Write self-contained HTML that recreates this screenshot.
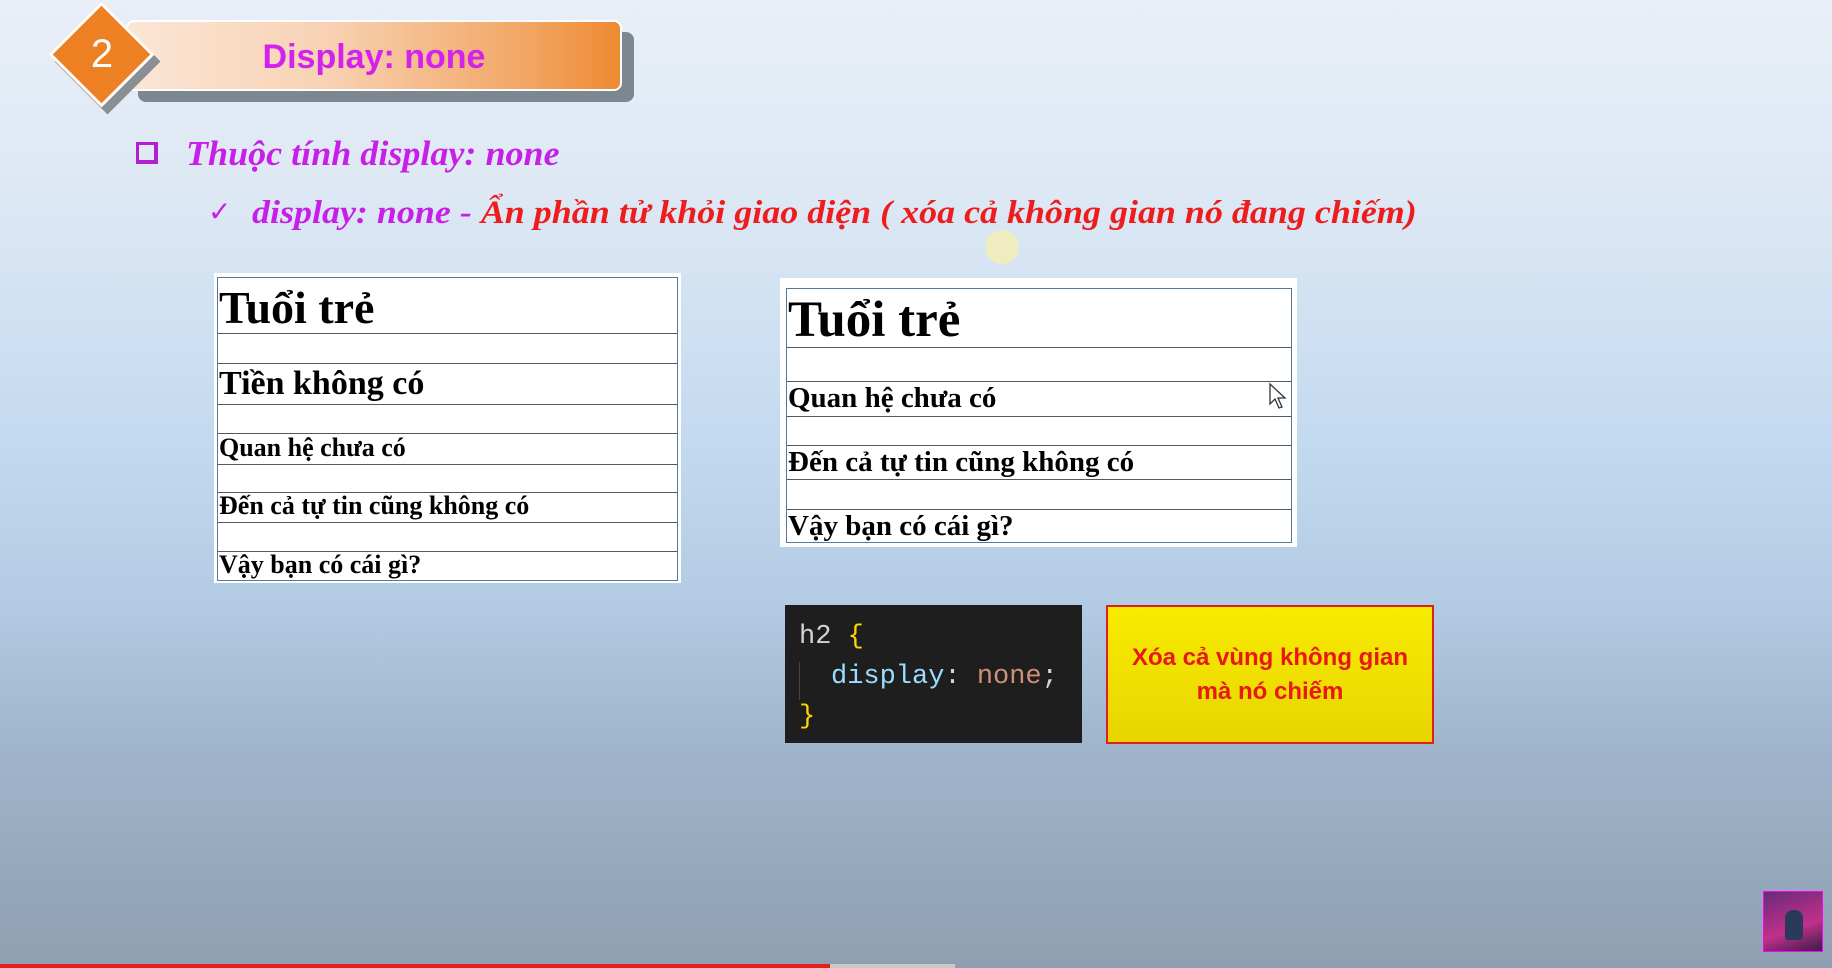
<!DOCTYPE html>
<html><head><meta charset="utf-8"><style>
*{margin:0;padding:0;box-sizing:border-box}
body{width:1832px;height:968px;overflow:hidden;position:relative;
background:linear-gradient(180deg,#e9eff7 0%,#dde8f4 20%,#c4daf0 45%,#b3cbe3 62%,#9fb4cb 78%,#8e9fb0 100%);
font-family:"Liberation Serif",serif}
.abs{position:absolute}
.tbl{position:absolute;background:#fff}
.in{position:absolute;border:1px solid #5a7890}
.ln{position:absolute;left:0;right:0;height:1px;background:#4a5a68}
.t{position:absolute;font-weight:bold;color:#000;white-space:nowrap;font-family:"Liberation Serif",serif}
</style></head><body>
<!-- banner -->
<div class="abs" style="left:138px;top:32px;width:496px;height:70px;background:#7d8790;border-radius:8px"></div>
<div class="abs" style="left:126px;top:20px;width:496px;height:71px;border-radius:8px;border:2px solid #fff;background:linear-gradient(90deg,#fbe6d6 0%,#f8d2b4 40%,#f2a766 80%,#ee8a32 100%)"></div>
<div class="abs" style="width:75px;height:75px;background:#8a8f96;transform:rotate(45deg);top:24px;left:70px"></div>
<div class="abs" style="left:64px;top:17px;width:75px;height:75px;background:#ee8024;border:3px solid #fff;transform:rotate(45deg)"></div>
<div class="abs" style="left:82px;top:32px;width:40px;text-align:center;color:#fff;font:40px 'Liberation Sans Narrow','Liberation Sans',sans-serif">2</div>
<div class="abs" style="left:126px;top:38px;width:496px;text-align:center;color:#d122ee;font:bold 34px 'Liberation Sans Narrow','Liberation Sans',sans-serif">Display: none</div>
<!-- bullets -->
<div class="abs" style="left:136px;top:142px;width:22px;height:22px;border:3px solid #b020d0;border-right-width:4px;border-bottom-width:4px"></div>
<div class="abs" style="left:186px;top:134px;color:#c81fe8;font:italic bold 35px 'Liberation Serif',serif;white-space:nowrap;transform:scaleX(1.03);transform-origin:left">Thuộc tính display: none</div>
<div class="abs" style="left:208px;top:195px;color:#c81fe8;font:28px 'DejaVu Sans',sans-serif">✓</div>
<div class="abs" style="left:252px;top:195px;font:italic bold 33px 'Liberation Serif',serif;white-space:nowrap;transform:scaleX(1.09);transform-origin:left"><span style="color:#c81fe8">display: none - </span><span style="color:#ee1c1c">Ẩn phần tử khỏi giao diện ( xóa cả không gian nó đang chiếm)</span></div>
<div class="abs" style="left:985px;top:230px;width:34px;height:34px;border-radius:50%;background:rgba(250,240,170,.7)"></div>
<!-- left table -->
<div class="tbl" style="left:214px;top:273px;width:467px;height:310px">
 <div class="in" style="left:3px;top:4px;width:461px;height:304px">
  <div class="ln" style="top:55px"></div><div class="ln" style="top:85px"></div>
  <div class="ln" style="top:126px"></div><div class="ln" style="top:155px"></div>
  <div class="ln" style="top:186px"></div><div class="ln" style="top:214px"></div>
  <div class="ln" style="top:244px"></div><div class="ln" style="top:273px"></div>
  <div class="t" style="left:1px;top:3px;font-size:46px">Tuổi trẻ</div>
  <div class="t" style="left:1px;top:87px;font-size:34px">Tiền không có</div>
  <div class="t" style="left:1px;top:155px;font-size:26px">Quan hệ chưa có</div>
  <div class="t" style="left:1px;top:213px;font-size:26px">Đến cả tự tin cũng không có</div>
  <div class="t" style="left:1px;top:272px;font-size:26px">Vậy bạn có cái gì?</div>
 </div>
</div>
<!-- right table -->
<div class="tbl" style="left:780px;top:278px;width:517px;height:269px">
 <div class="in" style="left:6px;top:10px;width:506px;height:255px">
  <div class="ln" style="top:58px"></div><div class="ln" style="top:92px"></div>
  <div class="ln" style="top:127px"></div><div class="ln" style="top:156px"></div>
  <div class="ln" style="top:190px"></div><div class="ln" style="top:220px"></div>
  <div class="t" style="left:1px;top:2px;font-size:51px">Tuổi trẻ</div>
  <div class="t" style="left:1px;top:93px;font-size:29px">Quan hệ chưa có</div>
  <div class="t" style="left:1px;top:157px;font-size:29px">Đến cả tự tin cũng không có</div>
  <div class="t" style="left:1px;top:221px;font-size:29px">Vậy bạn có cái gì?</div>
 </div>
 <svg class="abs" style="left:488px;top:104px" width="20" height="28" viewBox="0 0 20 28"><path d="M2 2 L2 22 L7 17 L11 26 L14 25 L10 16 L17 16 Z" fill="#fff" stroke="#333" stroke-width="1.3"/></svg>
</div>
<!-- code box -->
<div class="abs" style="left:785px;top:605px;width:297px;height:138px;background:#1e1e1e;font:27px 'Liberation Mono',monospace">
 <div class="abs" style="left:14px;top:17px;white-space:pre;color:#d4d4d4">h2 <span style="color:#ffd700">{</span></div>
 <div class="abs" style="left:14px;top:57px;width:1px;height:38px;background:#444"></div>
 <div class="abs" style="left:46px;top:57px;white-space:pre"><span style="color:#9cdcfe">display</span><span style="color:#d4d4d4">: </span><span style="color:#ce9178">none</span><span style="color:#d4d4d4">;</span></div>
 <div class="abs" style="left:14px;top:97px;color:#ffd700">}</div>
</div>
<!-- yellow -->
<div class="abs" style="left:1106px;top:605px;width:328px;height:139px;background:linear-gradient(180deg,#f8ec00,#e8d400);border:2px solid #e02020;display:flex;align-items:center;justify-content:center;text-align:center;color:#e81818;font:bold 24px/34px 'Liberation Sans Narrow','Liberation Sans',sans-serif">Xóa cả vùng không gian<br>mà nó chiếm</div>
<!-- thumbnail -->
<div class="abs" style="left:1763px;top:891px;width:60px;height:61px;background:linear-gradient(160deg,#6a2a7a,#c0308a 60%,#3a1a4a);border:1px solid #f0f"></div>
<div class="abs" style="left:1785px;top:910px;width:18px;height:30px;background:#2a3a5a;border-radius:8px 8px 3px 3px"></div>
<!-- progress -->
<div class="abs" style="left:0;top:964px;width:830px;height:4px;background:#e52020"></div>
<div class="abs" style="left:830px;top:964px;width:125px;height:4px;background:#c8c8c8"></div>
</body></html>
